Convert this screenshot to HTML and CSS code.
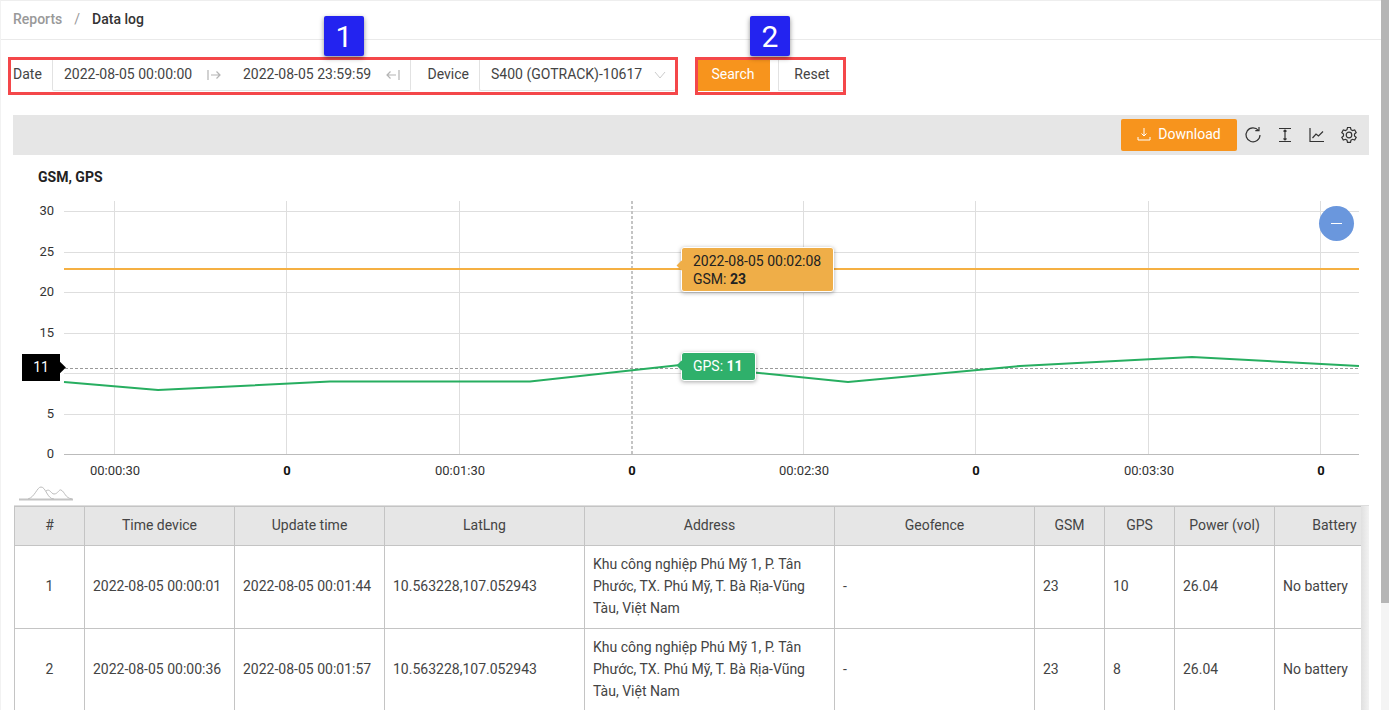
FILE: index.html
```html
<!DOCTYPE HTML>
<html>
    <head>
        <meta charset="utf-8">
        <title>Data log</title>
        <link rel="stylesheet" href="styles.css">
    </head>

    <body>
        <div class="page">
            <div class="content">
                <div class="breadcrumb">
                    <span class="crumb-parent">Reports</span>
                    <span class="crumb-sep">/</span>
                    <span class="crumb-current">Data log</span>
                </div>

                <div class="filters">
                    <div class="marked filter-form">
                        <div class="badge badge-one">1</div>
                        <label class="field-label label-date">Date</label>
                        <div class="date-range">
                            <span class="date-value">2022-08-05 00:00:00</span>
                            <svg class="date-icon" width="14" height="12" viewBox="0 0 14 12"><path d="M1 1v10M4 6h9M9.500 2.500L13 6l-3.500 3.500"/></svg>
                            <span class="date-value date-end">2022-08-05 23:59:59</span>
                            <svg class="date-icon" width="14" height="12" viewBox="0 0 14 12"><path d="M13 1v10M10 6H1M4.500 2.500L1 6l3.500 3.500"/></svg>
                        </div>
                        <label class="field-label label-device">Device</label>
                        <div class="select-box">
                            <span>S400 (GOTRACK)-10617</span>
                            <svg class="select-arrow" width="12" height="8" viewBox="0 0 12 8"><path d="M1 1l5 6 5-6"/></svg>
                        </div>
                    </div>
                    <div class="marked filter-actions">
                        <div class="badge badge-two">2</div>
                        <button class="btn-search">Search</button>
                        <button class="btn-reset">Reset</button>
                    </div>
                </div>

                <div class="toolbar">
                    <button class="btn-download">
                        <svg width="14" height="14" viewBox="0 0 14 14"><path d="M7 1v8M4.500 6.500L7 9l2.500-2.500M1 10v3h12v-3"/></svg>
                        Download
                    </button>
                    <button class="tool">
                        <svg width="18" height="18" viewBox="0 0 18 18"><path d="M14.500 4.500A7 7 0 1 0 16 9M15 1v3.700h-3.700"/></svg>
                    </button>
                    <button class="tool">
                        <svg width="18" height="18" viewBox="0 0 18 18"><path d="M3 2.500h12M3 15.500h12M9 4v10M7.500 5.500L9 4l1.500 1.500M7.500 12.500L9 14l1.500-1.500"/></svg>
                    </button>
                    <button class="tool">
                        <svg width="18" height="18" viewBox="0 0 18 18"><path d="M2 2v13.500h14M4.500 12l3.500-4 2.500 2 4.500-4.500"/></svg>
                    </button>
                    <button class="tool">
                        <svg width="18" height="18" viewBox="0 0 18 18"><path d="M7.500 1.500h3l.5 2.200 1.500.9 2.200-.7 1.500 2.600-1.700 1.500v1.900l1.700 1.500-1.500 2.600-2.200-.7-1.500.9-.5 2.200h-3l-.5-2.200-1.500-.9-2.200.7-1.500-2.600 1.700-1.500V8l-1.700-1.500 1.500-2.600 2.200.7 1.500-.9z"/><circle cx="9" cy="9" r="2.800"/></svg>
                    </button>
                </div>

                <div class="chart">
                    <div class="chart-title">GSM, GPS</div>
                    <svg class="chart-svg" width="1381" height="315" viewBox="0 190 1381 315">
                        <g class="grid">
                            <path d="M64 211.500H1359M64 252.500H1359M64 292.500H1359M64 333.500H1359M64 373.500H1359M64 414.500H1359"/>
                            <path d="M114.500 201V454M286.500 201V454M459.500 201V454M803.500 201V454M975.500 201V454M1148.500 201V454M1320.500 201V454"/>
                        </g>
                        <path class="axis" d="M64 454.500H1359"/>
                        <path class="cursor-x" d="M632 201V454"/>
                        <path class="cursor-y" d="M60 368.500H1359"/>
                        <path class="line-gsm" d="M64 269H1359"/>
                        <path class="line-gps" d="M64 382L158 390L330 381.500L530 381.500L680 365L848 382L1020 366L1192 357L1359 366"/>
                        <g class="y-labels">
                            <text x="54" y="215">30</text>
                            <text x="54" y="256">25</text>
                            <text x="54" y="296">20</text>
                            <text x="54" y="337">15</text>
                            <text x="54" y="418">5</text>
                            <text x="54" y="458">0</text>
                        </g>
                        <g class="x-labels">
                            <text x="115" y="475">00:00:30</text>
                            <text x="287" y="475" class="x-zero">0</text>
                            <text x="460" y="475">00:01:30</text>
                            <text x="632" y="475" class="x-zero">0</text>
                            <text x="804" y="475">00:02:30</text>
                            <text x="976" y="475" class="x-zero">0</text>
                            <text x="1149" y="475">00:03:30</text>
                            <text x="1321" y="475" class="x-zero">0</text>
                        </g>
                        <g class="mini-wave">
                            <path class="mini-base" d="M19 499.500H73"/>
                            <path d="M28 499C35 497 37 487 41 487C46 487 47 499 54 499M46 491C50 488 51 494 54 494C58 494 59 489 61 490C65 492 65 498 72 499"/>
                        </g>
                    </svg>
                    <div class="y-tag">11</div>
                    <div class="tip tip-gsm">2022-08-05 00:02:08<br>GSM: <b>23</b></div>
                    <div class="tip tip-gps">GPS: <b>11</b></div>
                    <div class="zoom-out"></div>
                </div>

                <div class="table-wrap">
                    <table class="log-table">
                        <colgroup>
                            <col class="col-no"><col class="col-time"><col class="col-time"><col class="col-latlng"><col class="col-address"><col class="col-geo"><col class="col-sig"><col class="col-sig"><col class="col-power"><col class="col-battery">
                        </colgroup>
                        <thead>
                            <tr>
                                <th>#</th><th>Time device</th><th>Update time</th><th>LatLng</th><th>Address</th><th>Geofence</th><th>GSM</th><th>GPS</th><th>Power (vol)</th><th>Battery</th>
                            </tr>
                        </thead>
                        <tbody>
                            <tr>
                                <td class="cell-no">1</td>
                                <td>2022-08-05 00:00:01</td>
                                <td>2022-08-05 00:01:44</td>
                                <td>10.563228,107.052943</td>
                                <td>Khu công nghiệp Phú Mỹ 1, P. Tân Phước, TX. Phú Mỹ, T. Bà Rịa-Vũng Tàu, Việt Nam</td>
                                <td>-</td>
                                <td>23</td>
                                <td>10</td>
                                <td>26.04</td>
                                <td>No battery</td>
                            </tr>
                            <tr>
                                <td class="cell-no">2</td>
                                <td>2022-08-05 00:00:36</td>
                                <td>2022-08-05 00:01:57</td>
                                <td>10.563228,107.052943</td>
                                <td>Khu công nghiệp Phú Mỹ 1, P. Tân Phước, TX. Phú Mỹ, T. Bà Rịa-Vũng Tàu, Việt Nam</td>
                                <td>-</td>
                                <td>23</td>
                                <td>8</td>
                                <td>26.04</td>
                                <td>No battery</td>
                            </tr>
                        </tbody>
                    </table>
                </div>
            </div>
            <div class="scrollbar"><div class="scroll-thumb"></div></div>
        </div>
    </body>
</html>
```

FILE: styles.css
```css
html, body{
    margin: 0;
    background-color: #fff;
}

body{
    font-family: Roboto, "Liberation Sans", sans-serif;
    font-size: 14px;
    color: #444;
}

.page{
    display: flex;
    width: 1389px;
    height: 710px;
    overflow: hidden;
}

.content{
    flex: 1;
    min-width: 0;
    border-left: 1px solid #f2f2f2;
    border-top: 1px solid #eee;
}

.scrollbar{
    width: 8px;
    background-color: #f4f4f4;
}

.scroll-thumb{
    height: 603px;
    background-color: #b5b5b5;
}

/* breadcrumb */
.breadcrumb{
    display: flex;
    align-items: center;
    height: 36px;
    padding: 0 0 2px 12px;
    border-bottom: 1px solid #eaeaea;
    font-weight: 500;
}

.crumb-parent{
    color: #999;
}

.crumb-sep{
    margin: 0 12px;
    color: #999;
    font-weight: 400;
}

.crumb-current{
    color: #333;
}

/* filters */
.filters{
    display: flex;
    margin: 17px 0 20px 7px;
}

.marked{
    position: relative;
    display: flex;
    height: 32px;
    border: 3px solid #f4474a;
}

.filter-form{
    width: 664px;
}

.filter-actions{
    width: 145px;
    margin-left: 17px;
    justify-content: space-between;
}

.badge{
    position: absolute;
    top: -44px;
    width: 40px;
    height: 40px;
    border-radius: 2px;
    background-color: #2323f0;
    box-shadow: 0 2px 5px rgba(0, 0, 0, 0.45);
    color: #fff;
    font-size: 30px;
    line-height: 41px;
    text-align: center;
}

.badge-one{
    left: 313px;
}

.badge-two{
    left: 52px;
}

.field-label{
    display: flex;
    align-items: center;
    padding-bottom: 5px;
    color: #444;
}

.label-date{
    width: 39px;
    padding-left: 2px;
}

.label-device{
    width: 58px;
    justify-content: flex-end;
    padding-right: 10px;
}

.date-range, .select-box{
    display: flex;
    align-items: center;
    box-sizing: border-box;
    height: 31px;
    padding-bottom: 3px;
    border: 1px solid #e2e2e2;
    border-top: 0;
    border-radius: 0 0 2px 2px;
}

.date-range{
    width: 359px;
    padding-left: 11px;
}

.date-value{
    width: 128px;
    white-space: nowrap;
}

.date-end{
    margin-left: 22px;
}

.date-icon{
    margin-left: 15px;
    margin-top: 3px;
}

.date-icon path{
    fill: none;
    stroke: #b4b4b4;
    stroke-width: 1.2;
}

.select-arrow{
    margin-top: 3px;
}

.select-arrow path{
    fill: none;
    stroke: #ccc;
    stroke-width: 1;
}

.select-box{
    justify-content: space-between;
    width: 196px;
    padding-right: 9px;
    padding-left: 11px;
    border-right: 0;
}

.btn-search, .btn-reset, .btn-download{
    border: 0;
    padding: 0;
    font-family: inherit;
    font-size: 14px;
}

.btn-search{
    width: 72px;
    height: 31px;
    padding: 0 2px 3px 0;
    background-color: #f7941d;
    color: #fff;
}

.btn-reset{
    width: 65px;
    height: 31px;
    padding: 0 0 3px 2px;
    border: 1px solid #e2e2e2;
    border-top: 0;
    border-right: 0;
    background-color: #fff;
    color: #444;
}

/* toolbar */
.toolbar{
    display: flex;
    align-items: center;
    justify-content: flex-end;
    height: 40px;
    margin: 0 12px;
    padding-right: 4px;
    background-color: #e6e6e6;
}

.btn-download{
    display: flex;
    align-items: center;
    justify-content: center;
    gap: 7px;
    width: 116px;
    height: 32px;
    padding-bottom: 2px;
    border-radius: 2px;
    background-color: #f7941d;
    color: #fff;
}

.btn-download svg path{
    fill: none;
    stroke: #fff;
    stroke-width: 1;
}

.tool{
    display: flex;
    align-items: center;
    justify-content: center;
    width: 32px;
    height: 32px;
    padding: 0;
    border: 0;
    background: none;
}

.tool svg *{
    fill: none;
    stroke: #333;
    stroke-width: 1.2;
}

/* chart */
.chart{
    position: relative;
    height: 350px;
}

.chart-title{
    height: 20px;
    padding: 15px 0 0 37px;
    color: #222;
    font-weight: 700;
    line-height: 15px;
}

.chart-svg{
    display: block;
    margin-left: -1px;
    font-family: Roboto, "Liberation Sans", sans-serif;
    font-size: 13px;
}

.grid path{
    fill: none;
    stroke: #dedede;
    stroke-width: 1;
}

.axis{
    stroke: #bbb;
    stroke-width: 1;
}

.cursor-x{
    stroke: #c4c4c4;
    stroke-width: 2;
    stroke-dasharray: 3 2;
}

.cursor-y{
    stroke: #999;
    stroke-width: 1;
    stroke-dasharray: 3 2;
}

.line-gsm, .line-gps{
    fill: none;
    stroke-width: 2;
}

.line-gsm{
    stroke: #f5b043;
}

.line-gps{
    stroke: #27ae60;
}

.y-labels text{
    fill: #333;
    text-anchor: end;
}

.x-labels text{
    fill: #333;
    text-anchor: middle;
}

.x-labels .x-zero{
    fill: #111;
    font-weight: 700;
}

.mini-wave path{
    fill: none;
    stroke: #bdbdbd;
    stroke-width: 1;
}

.mini-wave .mini-base{
    stroke: #c4c4c4;
    stroke-width: 2;
}

.y-tag{
    position: absolute;
    left: 21px;
    top: 199px;
    width: 38px;
    height: 27px;
    background-color: #000;
    color: #fff;
    line-height: 27px;
    text-align: center;
}

.y-tag::after{
    content: "";
    position: absolute;
    right: -4px;
    top: 9px;
    width: 9px;
    height: 9px;
    background-color: #000;
    transform: rotate(45deg);
}

.tip{
    position: absolute;
    left: 680px;
    box-sizing: border-box;
    padding: 0 12px 0 11px;
    border: 1px solid #fff;
    border-radius: 3px;
    box-shadow: 0 1px 4px rgba(0, 0, 0, 0.35);
    white-space: nowrap;
}

.tip::before{
    content: "";
    position: absolute;
    left: -4px;
    width: 7px;
    height: 7px;
    background-color: inherit;
    transform: rotate(45deg);
}

.tip-gsm{
    top: 92px;
    height: 45px;
    padding-top: 4px;
    background-color: #efae48;
    color: #222;
    line-height: 18px;
}

.tip-gsm::before{
    top: 14px;
}

.tip-gps{
    top: 197px;
    height: 29px;
    background-color: #2fb06b;
    color: #fff;
    line-height: 27px;
}

.tip-gps::before{
    top: 9px;
}

.zoom-out{
    position: absolute;
    left: 1318px;
    top: 51px;
    width: 35px;
    height: 35px;
    border-radius: 50%;
    background-color: #6a97dd;
}

.zoom-out::after{
    content: "";
    position: absolute;
    left: 12px;
    top: 17px;
    width: 11px;
    height: 1px;
    background-color: #fff;
}

/* table */
.table-wrap{
    position: relative;
    width: 1355px;
    margin-left: 13px;
    overflow: hidden;
    border-top: 1px solid #ddd;
}

.table-wrap::after{
    content: "";
    position: absolute;
    top: 0;
    right: 0;
    bottom: 0;
    width: 8px;
    background: linear-gradient(to right, #e0e0e0, #f2f2f2);
}

.log-table{
    width: 1380px;
    table-layout: fixed;
    border-collapse: collapse;
    color: #444;
}

.col-no{
    width: 70px;
}

.col-time{
    width: 150px;
}

.col-latlng{
    width: 200px;
}

.col-address{
    width: 250px;
}

.col-geo{
    width: 200px;
}

.col-sig{
    width: 70px;
}

.col-power{
    width: 100px;
}

.col-battery{
    width: 120px;
}

.log-table th, .log-table td{
    border: 1px solid #c4c4c4;
}

.log-table th{
    height: 39px;
    padding: 0 0 2px;
    box-sizing: border-box;
    background-color: #e6e6e6;
    font-weight: 400;
    text-align: center;
}

.log-table td{
    height: 83px;
    padding: 0 8px 2px;
    line-height: 22px;
    box-sizing: border-box;
}

.log-table .cell-no{
    text-align: center;
}
```
